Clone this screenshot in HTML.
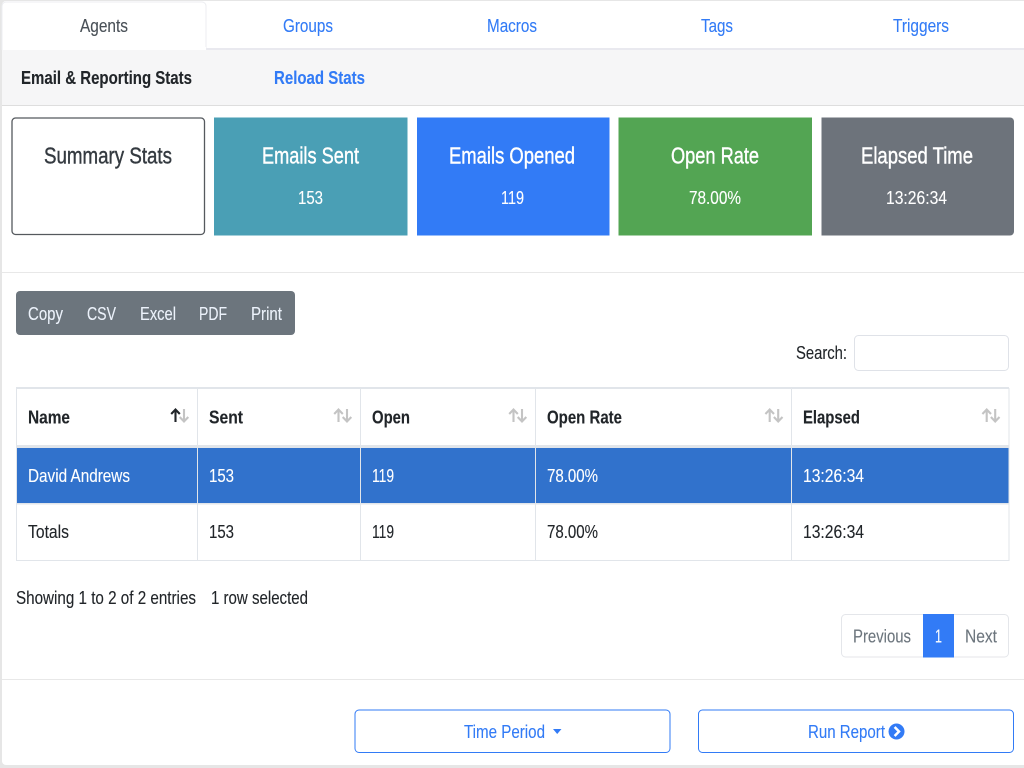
<!DOCTYPE html>
<html lang="en">
<head>
<meta charset="utf-8">
<title>Email &amp; Reporting Stats</title>
<style>
html,body{margin:0;padding:0;width:1024px;height:768px;overflow:hidden;background:#e6e6e6}
svg{display:block;position:absolute;left:0;top:0}
text{font-family:"Liberation Sans",Arial,sans-serif;font-size:18.5px;fill:#212529;stroke:currentColor;stroke-width:.12px}
.b{font-weight:700}
.l{fill:#327bf6;color:#327bf6}
.w{fill:#fff;color:#fff}
.h{font-size:23.5px;stroke-width:.4px}
.g{fill:#6c757d;color:#6c757d}
.t{fill:#495057;color:#495057}
.bf{fill:#ecf2fb;color:#ecf2fb}
.d{color:#212529}
.s{fill:#343a40;color:#343a40}
</style>
</head>
<body>
<svg width="1024" height="768" viewBox="0 0 1024 768" xmlns="http://www.w3.org/2000/svg">
<rect x="0" y="0" width="1024" height="768" fill="#e6e6e6"/>
<rect x="2" y="1" width="1026" height="764" rx="4" fill="#fff"/>
<rect x="2" y="48" width="1022" height="2" fill="#e9e9ef"/>
<path d="M2 50V6a4 4 0 0 1 4-4H202a4 4 0 0 1 4 4V50" fill="#fff" stroke="#ecedf1" stroke-width="1"/>
<rect x="3" y="47" width="203" height="4" fill="#fff"/>
<rect x="2" y="50" width="1022" height="55" fill="#f6f6f7"/>
<rect x="2" y="105" width="1022" height="1" fill="#dedede"/>

<text x="80" y="32" textLength="48" lengthAdjust="spacingAndGlyphs" class="t">Agents</text>
<text x="283" y="32" textLength="50" lengthAdjust="spacingAndGlyphs" class="l">Groups</text>
<text x="487" y="32" textLength="50" lengthAdjust="spacingAndGlyphs" class="l">Macros</text>
<text x="701" y="32" textLength="32" lengthAdjust="spacingAndGlyphs" class="l">Tags</text>
<text x="893" y="32" textLength="56" lengthAdjust="spacingAndGlyphs" class="l">Triggers</text>

<text x="21" y="84" textLength="171" lengthAdjust="spacingAndGlyphs" class="b d">Email &amp; Reporting Stats</text>
<text x="274" y="84" textLength="91" lengthAdjust="spacingAndGlyphs" class="b l">Reload Stats</text>

<rect x="12" y="118" width="192.5" height="116.5" rx="3.5" fill="#fff" stroke="#55595e" stroke-width="1.3"/>
<rect x="214" y="117.5" width="193.5" height="118" fill="#4a9fb5"/>
<rect x="417" y="117.5" width="192.5" height="118" fill="#327bf6"/>
<rect x="618.5" y="117.5" width="193.5" height="118" fill="#53a553"/>
<path d="M821.5 117.5H1010a4 4 0 0 1 4 4V231.5a4 4 0 0 1-4 4H821.5Z" fill="#6d737b"/>

<text x="44" y="163.5" textLength="128" lengthAdjust="spacingAndGlyphs" class="h s">Summary Stats</text>
<text x="262" y="163.5" textLength="97" lengthAdjust="spacingAndGlyphs" class="h w">Emails Sent</text>
<text x="449" y="163.5" textLength="126" lengthAdjust="spacingAndGlyphs" class="h w">Emails Opened</text>
<text x="671" y="163.5" textLength="88" lengthAdjust="spacingAndGlyphs" class="h w">Open Rate</text>
<text x="861" y="163.5" textLength="112" lengthAdjust="spacingAndGlyphs" class="h w">Elapsed Time</text>
<text x="298" y="204" textLength="25" lengthAdjust="spacingAndGlyphs" class="w">153</text>
<text x="501" y="204" textLength="23" lengthAdjust="spacingAndGlyphs" class="w">119</text>
<text x="689" y="204" textLength="52" lengthAdjust="spacingAndGlyphs" class="w">78.00%</text>
<text x="886" y="204" textLength="61" lengthAdjust="spacingAndGlyphs" class="w">13:26:34</text>

<rect x="2" y="272" width="1022" height="1" fill="#e8e8e8"/>

<rect x="16" y="291" width="279" height="44" rx="4" fill="#6c757d"/>
<text x="28" y="320" textLength="35" lengthAdjust="spacingAndGlyphs" class="bf">Copy</text>
<text x="87" y="320" textLength="29" lengthAdjust="spacingAndGlyphs" class="bf">CSV</text>
<text x="140" y="320" textLength="36" lengthAdjust="spacingAndGlyphs" class="bf">Excel</text>
<text x="199" y="320" textLength="28" lengthAdjust="spacingAndGlyphs" class="bf">PDF</text>
<text x="251" y="320" textLength="31" lengthAdjust="spacingAndGlyphs" class="bf">Print</text>

<text x="796" y="359" textLength="51" lengthAdjust="spacingAndGlyphs" class="d">Search:</text>
<rect x="854.5" y="335.5" width="154" height="35" rx="4" fill="#fff" stroke="#dfe2e8"/>

<rect x="16" y="448" width="993" height="55" fill="#3172cc"/>
<g fill="#e1e5ea">
<rect x="16" y="387" width="993" height="2"/>
<rect x="16" y="445" width="993" height="3"/>
<rect x="16" y="503" width="993" height="1.5"/>
<rect x="16" y="560" width="993" height="1"/>
<rect x="16" y="388" width="1" height="173"/>
<rect x="197" y="388" width="1" height="173"/>
<rect x="360" y="388" width="1" height="173"/>
<rect x="535" y="388" width="1" height="173"/>
<rect x="791" y="388" width="1" height="173"/>
<rect x="1008.5" y="388" width="1" height="173"/>
</g>

<text x="28" y="423.5" textLength="42" lengthAdjust="spacingAndGlyphs" class="b d">Name</text>
<text x="209" y="423.5" textLength="34" lengthAdjust="spacingAndGlyphs" class="b d">Sent</text>
<text x="372" y="423.5" textLength="38" lengthAdjust="spacingAndGlyphs" class="b d">Open</text>
<text x="547" y="423.5" textLength="75" lengthAdjust="spacingAndGlyphs" class="b d">Open Rate</text>
<text x="803" y="423.5" textLength="57" lengthAdjust="spacingAndGlyphs" class="b d">Elapsed</text>

<g fill="none" stroke-width="2.1">
<path d="M175.5 422V409.5M171.2 414L175.5 409.5L179.8 414" stroke="#212529"/>
<path d="M184 409V421.5M179.7 417L184 421.5L188.3 417" stroke="#c4c4c4"/>
<g stroke="#c4c4c4">
<path d="M338.5 422V409.5M334.2 414L338.5 409.5L342.8 414"/>
<path d="M347 409V421.5M342.7 417L347 421.5L351.3 417"/>
<path d="M513.5 422V409.5M509.2 414L513.5 409.5L517.8 414"/>
<path d="M522 409V421.5M517.7 417L522 421.5L526.3 417"/>
<path d="M769.7 422V409.5M765.4 414L769.7 409.5L774 414"/>
<path d="M778.2 409V421.5M773.9 417L778.2 421.5L782.5 417"/>
<path d="M986.7 422V409.5M982.4 414L986.7 409.5L991 414"/>
<path d="M995.2 409V421.5M990.9 417L995.2 421.5L999.5 417"/>
</g>
</g>

<text x="28" y="482" textLength="102" lengthAdjust="spacingAndGlyphs" class="w">David Andrews</text>
<text x="209" y="482" textLength="25" lengthAdjust="spacingAndGlyphs" class="w">153</text>
<text x="372" y="482" textLength="22" lengthAdjust="spacingAndGlyphs" class="w">119</text>
<text x="547" y="482" textLength="51" lengthAdjust="spacingAndGlyphs" class="w">78.00%</text>
<text x="803" y="482" textLength="61" lengthAdjust="spacingAndGlyphs" class="w">13:26:34</text>

<text x="28" y="538" textLength="41" lengthAdjust="spacingAndGlyphs" class="d">Totals</text>
<text x="209" y="538" textLength="25" lengthAdjust="spacingAndGlyphs" class="d">153</text>
<text x="372" y="538" textLength="22" lengthAdjust="spacingAndGlyphs" class="d">119</text>
<text x="547" y="538" textLength="51" lengthAdjust="spacingAndGlyphs" class="d">78.00%</text>
<text x="803" y="538" textLength="61" lengthAdjust="spacingAndGlyphs" class="d">13:26:34</text>

<text x="16" y="604" textLength="180" lengthAdjust="spacingAndGlyphs" class="d">Showing 1 to 2 of 2 entries</text>
<text x="211" y="604" textLength="97" lengthAdjust="spacingAndGlyphs" class="d">1 row selected</text>

<rect x="841.5" y="614.5" width="167" height="42.5" rx="4" fill="#fff" stroke="#e4e6ea"/>
<rect x="923" y="614" width="31" height="43.5" fill="#327bf6"/>
<text x="853" y="642.5" textLength="58" lengthAdjust="spacingAndGlyphs" class="g">Previous</text>
<text x="935" y="642.5" textLength="7" lengthAdjust="spacingAndGlyphs" class="w">1</text>
<text x="965" y="642.5" textLength="32" lengthAdjust="spacingAndGlyphs" class="g">Next</text>

<rect x="2" y="679" width="1022" height="1" fill="#e8e8e8"/>

<rect x="355" y="710" width="315" height="42.5" rx="4" fill="#fff" stroke="#327bf6"/>
<text x="464" y="738" textLength="81" lengthAdjust="spacingAndGlyphs" class="l">Time Period</text>
<path d="M553 729H561.5L557.2 734Z" fill="#327bf6"/>

<rect x="698.5" y="710" width="315" height="42.5" rx="4" fill="#fff" stroke="#327bf6"/>
<text x="808" y="738" textLength="77" lengthAdjust="spacingAndGlyphs" class="l">Run Report</text>
<circle cx="896.5" cy="731.5" r="8" fill="#327bf6"/>
<path d="M894.6 727L899 731.5L894.6 736" fill="none" stroke="#fff" stroke-width="2.5"/>
</svg>
</body>
</html>
